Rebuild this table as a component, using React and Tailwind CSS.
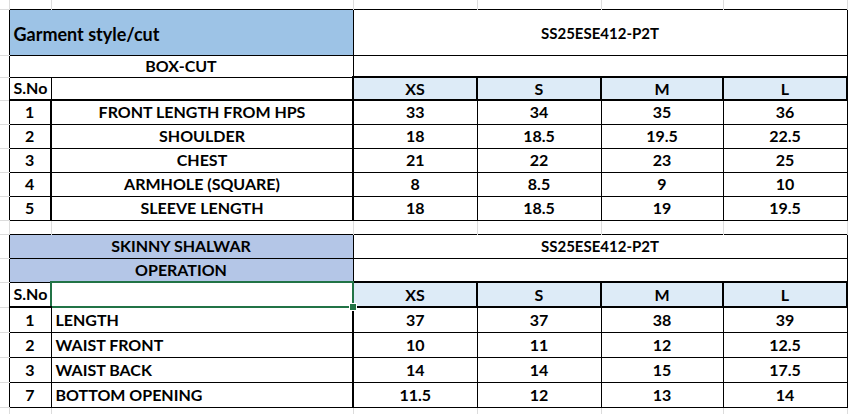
const FONT = "font-[Lato,'Liberation_Sans',sans-serif]";

const topRows = [
  ["1", "FRONT LENGTH FROM HPS", "33", "34", "35", "36"],
  ["2", "SHOULDER", "18", "18.5", "19.5", "22.5"],
  ["3", "CHEST", "21", "22", "23", "25"],
  ["4", "ARMHOLE (SQUARE)", "8", "8.5", "9", "10"],
  ["5", "SLEEVE LENGTH", "18", "18.5", "19", "19.5"],
];

const shalwarRows = [
  ["1", "LENGTH", "37", "37", "38", "39"],
  ["2", "WAIST FRONT", "10", "11", "12", "12.5"],
  ["3", "WAIST BACK", "14", "14", "15", "17.5"],
  ["7", "BOTTOM OPENING", "11.5", "12", "13", "14"],
];

const sizes = ["XS", "S", "M", "L"];

// empty sheet row, only the light gridlines
function BlankRow({ h }) {
  return (
    <tr className={h}>
      <td className="border-r border-b border-[#dcdcdc]" />
      <td className="border-r border-[#dcdcdc]" />
      <td className="border-r border-[#dcdcdc]" />
      <td className="border-r border-[#dcdcdc]" />
      <td className="border-r border-[#dcdcdc]" />
      <td className="border-r border-[#dcdcdc]" />
      <td className="border-r border-[#dcdcdc]" />
      <td />
    </tr>
  );
}

function Gutter() {
  return <td className="border-b border-[#dcdcdc]" />;
}

function SizeHeader() {
  return sizes.map((s) => (
    <td key={s} className="border-2 border-black bg-[#ddebf7] text-center">
      {s}
    </td>
  ));
}

export default function App() {
  return (
    <div className={`w-[853px] h-[414px] overflow-hidden bg-white text-black font-bold text-[16px] leading-none ${FONT}`}>
      <table className="w-[853px] table-fixed border-collapse">
        <colgroup>
          <col className="w-[9px]" />
          <col className="w-[42px]" />
          <col className="w-[302px]" />
          <col className="w-[124px]" />
          <col className="w-[124px]" />
          <col className="w-[122px]" />
          <col className="w-[124px]" />
          <col className="w-[6px]" />
        </colgroup>
        <tbody>
          <BlankRow h="h-[9px]" />

          {/* box-cut block */}
          <tr className="h-[46px]">
            <Gutter />
            <td colSpan={2} className="border border-black bg-[#9dc3e6] pl-[4px] pt-[4px] text-[18px]">
              Garment style/cut
            </td>
            <td colSpan={4} className="border border-black text-center text-[15px] pt-[2px]">
              SS25ESE412-P2T
            </td>
            <td />
          </tr>
          <tr className="h-[22px]">
            <Gutter />
            <td colSpan={2} className="border border-black text-center">
              BOX-CUT
            </td>
            <td colSpan={4} className="border border-black" />
            <td />
          </tr>
          <tr className="h-[23px]">
            <Gutter />
            <td className="border border-b-2 border-black pl-[4px]">S.No</td>
            <td className="border border-b-2 border-black" />
            <SizeHeader />
            <td />
          </tr>
          {topRows.map((r) => (
            <tr key={r[0]} className="h-[24px]">
              <Gutter />
              <td className="border border-black text-center">{r[0]}</td>
              <td className="border border-x-2 border-black text-center">{r[1]}</td>
              {r.slice(2).map((v, i) => (
                <td key={i} className="border border-black text-center">
                  {v}
                </td>
              ))}
              <td />
            </tr>
          ))}

          <BlankRow h="h-[14px]" />

          {/* skinny shalwar block */}
          <tr className="h-[24px]">
            <Gutter />
            <td colSpan={2} className="border border-black bg-[#b4c6e7] text-center">
              SKINNY SHALWAR
            </td>
            <td colSpan={4} className="border border-black text-center text-[15px]">
              SS25ESE412-P2T
            </td>
            <td />
          </tr>
          <tr className="h-[24px]">
            <Gutter />
            <td colSpan={2} className="border border-black bg-[#b4c6e7] text-center">
              OPERATION
            </td>
            <td colSpan={4} className="border border-black" />
            <td />
          </tr>
          <tr className="h-[25px]">
            <Gutter />
            <td className="border border-b-2 border-black pl-[4px]">S.No</td>
            <td className="relative border-2 border-[#217346] p-0">
              <span className="absolute -right-[4px] -bottom-[4px] h-[6px] w-[6px] bg-[#217346] outline outline-1 outline-white" />
            </td>
            <SizeHeader />
            <td />
          </tr>
          {shalwarRows.map((r) => (
            <tr key={r[0]} className="h-[25px]">
              <Gutter />
              <td className="border border-black text-center">{r[0]}</td>
              <td className="border border-r-2 border-black pl-[4px]">{r[1]}</td>
              {r.slice(2).map((v, i) => (
                <td key={i} className="border border-black text-center">
                  {v}
                </td>
              ))}
              <td />
            </tr>
          ))}

          <BlankRow h="h-[10px]" />
        </tbody>
      </table>
    </div>
  );
}
